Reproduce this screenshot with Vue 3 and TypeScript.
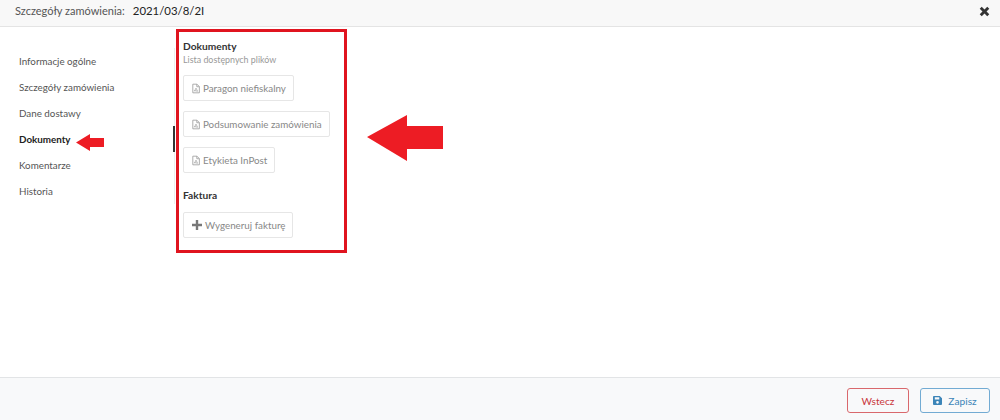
<script setup lang="ts">
const navItems = [
  { label: "Informacje ogólne" },
  { label: "Szczegóły zamówienia" },
  { label: "Dane dostawy" },
  { label: "Dokumenty", active: true },
  { label: "Komentarze" },
  { label: "Historia" },
];

const files = ["Paragon niefiskalny", "Podsumowanie zamówienia", "Etykieta InPost"];
</script>

<template>
  <div class="modal">
    <header class="top">
      <span class="top-label">Szczegóły zamówienia:</span>
      <span class="top-number">2021/03/8/2I</span>
      <svg class="close" viewBox="0 0 12 12" width="11" height="11">
        <path d="M3 .8 6 3.8 9 .8 11.2 3 8.2 6 11.2 9 9 11.2 6 8.2 3 11.2 .8 9 3.8 6 .8 3Z" fill="#333" />
      </svg>
    </header>

    <div class="body">
      <nav class="side">
        <a v-for="item in navItems" :key="item.label" :class="{ active: item.active }">{{ item.label }}</a>
      </nav>

      <main class="content">
        <h3>Dokumenty</h3>
        <p class="hint">Lista dostępnych plików</p>
        <div class="files">
          <button v-for="file in files" :key="file" class="btn">
            <svg viewBox="0 0 10 12" width="8" height="11" fill="none" stroke="#999" stroke-width="1">
              <path d="M1 .6H6.2L9.2 3.6V11.4H1Z" />
              <path d="M6 .8V3.8H9" />
              <path d="M3 9.5 5 5.5 7 9.5 3 8.5" stroke-width=".8" />
            </svg>
            {{ file }}
          </button>
        </div>
        <h3 class="invoice">Faktura</h3>
        <button class="btn">
          <svg viewBox="0 0 10 10" width="10" height="10">
            <path d="M3.8 0H6.2V3.8H10V6.2H6.2V10H3.8V6.2H0V3.8H3.8Z" fill="#777" />
          </svg>
          Wygeneruj fakturę
        </button>
      </main>
    </div>

    <footer class="bottom">
      <button class="action back">Wstecz</button>
      <button class="action save">
        <svg viewBox="0 0 10 10" width="9" height="9">
          <path d="M1 0H7.5L10 2.5V9A1 1 0 0 1 9 10H1A1 1 0 0 1 0 9V1A1 1 0 0 1 1 0ZM2 1.5V4H7V1.5ZM5 5.5A1.5 1.5 0 1 0 5 8.5 1.5 1.5 0 1 0 5 5.5Z" fill="#3c85b8" fill-rule="evenodd" />
        </svg>
        Zapisz
      </button>
    </footer>

    <!-- annotations drawn over the screenshot -->
    <div class="red-box"></div>
    <svg class="arrow arrow-small" viewBox="0 0 28 17" width="28" height="17">
      <path d="M0 8.5 14 0V4H28V13H14V17Z" fill="#ed1c24" />
    </svg>
    <svg class="arrow arrow-big" viewBox="0 0 76 46" width="76" height="46">
      <path d="M0 22 40 0V11H76V34H40V46Z" fill="#ed1c24" />
    </svg>
  </div>
</template>

<style>
html,
body {
  margin: 0;
  background: #fff;
}
</style>

<style scoped>
.modal {
  position: relative;
  width: 1000px;
  height: 420px;
  display: flex;
  flex-direction: column;
  overflow: hidden;
  font-family: Lato, "Liberation Sans", sans-serif;
  color: #555;
  background: #fff;
}

.top {
  height: 27px;
  box-sizing: border-box;
  display: flex;
  align-items: center;
  padding: 0 10px 5px 15px;
  background: #f8f8f8;
  border-bottom: 1px solid #e4e4e4;
  font-size: 11px;
}

.top-label {
  color: #555;
}

.top-number {
  margin-left: 8px;
  font-size: 11.4px;
  color: #222;
}

.close {
  margin-left: auto;
  margin-top: 1px;
}

.body {
  flex: 1;
  display: flex;
}

.side {
  width: 175px;
  box-sizing: border-box;
  height: 156px;
  margin-top: 21px;
  border-right: 1px solid #eee;
  display: flex;
  flex-direction: column;
  position: relative;
}

.side a {
  height: 26px;
  line-height: 26px;
  padding-left: 19px;
  font-size: 9.8px;
  color: #555;
  position: relative;
}

.side a.active {
  color: #222;
  font-weight: 700;
}

.side a.active::after {
  content: "";
  position: absolute;
  right: -1px;
  top: 0;
  width: 2px;
  height: 26px;
  background: #333;
}

.content {
  padding: 12px 0 0 8px;
  display: flex;
  flex-direction: column;
  align-items: flex-start;
}

h3 {
  margin: 0;
  font-size: 10.2px;
  line-height: 14px;
  font-weight: 700;
  color: #333;
}

.hint {
  margin: 0;
  font-size: 8.9px;
  line-height: 14px;
  color: #999;
}

.files {
  display: flex;
  flex-direction: column;
  align-items: flex-start;
  gap: 10px;
  margin-top: 8px;
}

.btn {
  height: 26px;
  box-sizing: border-box;
  padding: 0 7px 0 8px;
  display: flex;
  align-items: center;
  gap: 3px;
  background: #fff;
  border: 1px solid #e6e6e6;
  border-radius: 2px;
  font-family: inherit;
  font-size: 9.8px;
  color: #888;
}

.invoice {
  margin: 15px 0 10px;
}

.bottom {
  height: 43px;
  box-sizing: border-box;
  display: flex;
  justify-content: flex-end;
  align-items: flex-start;
  gap: 11px;
  padding: 10px 10px 0 0;
  background: #f8f9fa;
  border-top: 1px solid #e2e4e6;
}

.action {
  height: 25px;
  box-sizing: border-box;
  display: flex;
  align-items: center;
  justify-content: center;
  gap: 6px;
  background: transparent;
  border-radius: 3px;
  font-family: inherit;
  font-size: 10.2px;
  padding: 0;
}

.back {
  width: 62px;
  border: 1px solid #d9686c;
  color: #c9363c;
}

.save {
  width: 70px;
  border: 1px solid #72abd3;
  color: #3c85b8;
}

.red-box {
  position: absolute;
  left: 176px;
  top: 29px;
  width: 171px;
  height: 224px;
  box-sizing: border-box;
  border: 3px solid #e0141f;
}

.arrow {
  position: absolute;
}

.arrow-small {
  left: 76px;
  top: 134px;
}

.arrow-big {
  left: 367px;
  top: 115px;
}
</style>
